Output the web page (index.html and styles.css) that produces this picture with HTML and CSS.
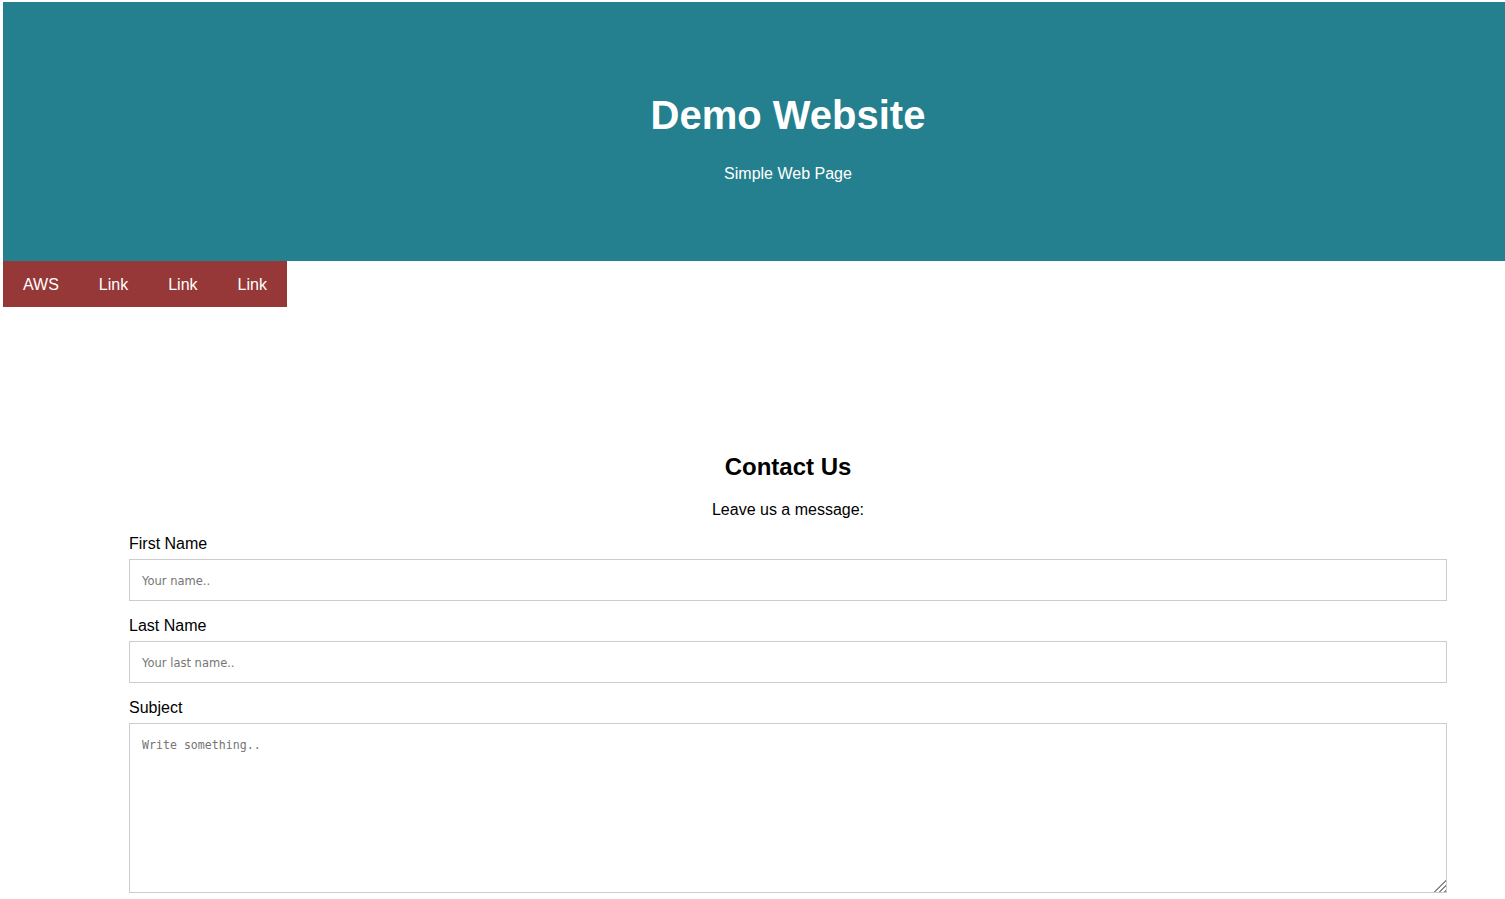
FILE: index.html
```html
<!DOCTYPE html>
<html lang="en">
<head>
<meta charset="utf-8">
<title>Demo Website</title>
<link rel="stylesheet" href="styles.css">
</head>
<body>
<div class="page">
  <header class="hero">
    <h1 class="hero-title">Demo Website</h1>
    <p class="hero-sub">Simple Web Page</p>
  </header>
  <nav class="topnav">
    <a class="topnav-link" href="#">AWS</a>
    <a class="topnav-link" href="#">Link</a>
    <a class="topnav-link" href="#">Link</a>
    <a class="topnav-link" href="#">Link</a>
  </nav>
  <main class="contact">
    <h2 class="contact-title">Contact Us</h2>
    <p class="contact-lead">Leave us a message:</p>
    <form class="contact-form">
      <label class="field-label" for="fname">First Name</label>
      <input class="field-input" type="text" id="fname" placeholder="Your name..">
      <label class="field-label" for="lname">Last Name</label>
      <input class="field-input" type="text" id="lname" placeholder="Your last name..">
      <label class="field-label" for="subject">Subject</label>
      <textarea class="field-area" id="subject" placeholder="Write something.."></textarea>
    </form>
  </main>
</div>
</body>
</html>
```
FILE: styles.css
```css
html {
  overflow: hidden;
}
body {
  margin: 2px 0 0 3px;
  font-family: "Liberation Sans", Arial, sans-serif;
  color: #000;
  background: #fff;
}
.page {
  width: 1570px;
}
.hero {
  background: #247f8e;
  color: #fff;
  text-align: center;
  padding: 90px 0 78px;
}
.hero-title {
  margin: 0;
  font-size: 40px;
  line-height: 46px;
  font-weight: bold;
}
.hero-sub {
  margin: 27px 0 0;
  font-size: 16px;
  line-height: 18px;
}
.topnav {
  display: flex;
  width: max-content;
  background: #963838;
}
.topnav-link {
  display: block;
  color: #fff;
  text-decoration: none;
  font-size: 16px;
  line-height: 18px;
  padding: 15px 20px 13px;
}
.contact {
  width: 1318px;
  margin: 0 auto;
  padding-top: 146px;
}
.contact-title {
  margin: 0;
  text-align: center;
  font-size: 24px;
  line-height: 28px;
  font-weight: bold;
}
.contact-lead {
  margin: 20px 0 16px;
  text-align: center;
  font-size: 16px;
  line-height: 18px;
}
.contact-form {
  display: flex;
  flex-direction: column;
}
.field-label {
  display: block;
  font-size: 16px;
  line-height: 18px;
}
.field-input,
.field-area {
  display: block;
  box-sizing: border-box;
  width: 100%;
  margin: 6px 0 16px;
  padding: 12px;
  border: 1px solid #ccc;
  border-radius: 0;
  background: #fff;
  outline: none;
}
.field-input {
  height: 42px;
  font-family: "DejaVu Sans", "Open Sans", sans-serif;
  font-size: 11.5px;
  padding-top: 13px;
  padding-bottom: 11px;
}
.field-area {
  height: 170px;
  margin-bottom: 0;
  padding-top: 14px;
  font-family: "DejaVu Sans Mono", "Liberation Mono", monospace;
  font-size: 11.6px;
  resize: vertical;
}
.field-area::-webkit-resizer {
  background:
    linear-gradient(135deg, #fff 52%, transparent 52%),
    repeating-linear-gradient(135deg, #fff 0 2px, #8a8a8a 2px 3.5px);
}
.field-input::placeholder,
.field-area::placeholder {
  color: #757575;
}
```
